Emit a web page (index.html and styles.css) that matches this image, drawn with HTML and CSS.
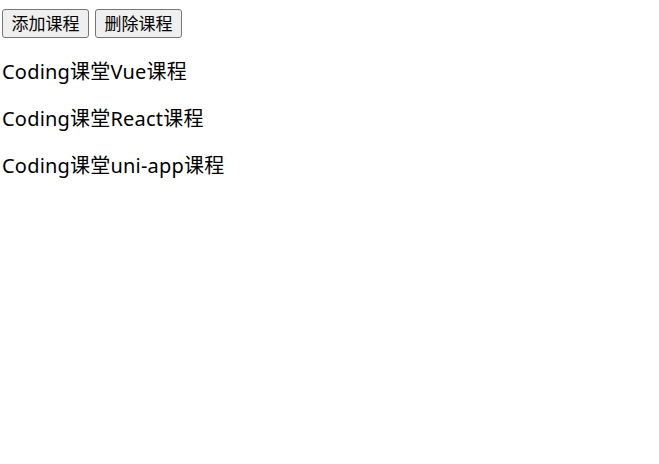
FILE: index.html
```html
<!DOCTYPE html>
<html lang="zh-CN">
<head>
    <meta charset="UTF-8">
    <meta name="viewport" content="width=device-width, initial-scale=1.0">
    <title>课程列表</title>
    <link rel="stylesheet" href="styles.css">
</head>
<body>
    <div id="app">
        <div class="actions">
            <button class="btn">添加课程</button>
            <button class="btn">删除课程</button>
        </div>
        <p class="course">Coding课堂Vue课程</p>
        <p class="course">Coding课堂React课程</p>
        <p class="course">Coding课堂uni-app课程</p>
    </div>
</body>
</html>
```

FILE: styles.css
```css
body {
    margin: 9px 2px;
    font-family: "Noto Sans", "Noto Sans CJK SC", sans-serif;
    font-size: 20px;
    color: #000;
    background: #fff;
}

.actions {
    display: flex;
    gap: 6px;
    margin-bottom: 2px;
}

.btn {
    height: 29px;
    padding: 0 8.5px;
    font-family: "Noto Sans", "Noto Sans CJK SC", sans-serif;
    font-size: 17px;
    line-height: 27px;
    color: #000;
    background-color: #efefef;
    border: 1px solid #767676;
    border-radius: 3px;
}

.course {
    margin: 20px 0;
    line-height: 27px;
    letter-spacing: 0.2px;
}
```
